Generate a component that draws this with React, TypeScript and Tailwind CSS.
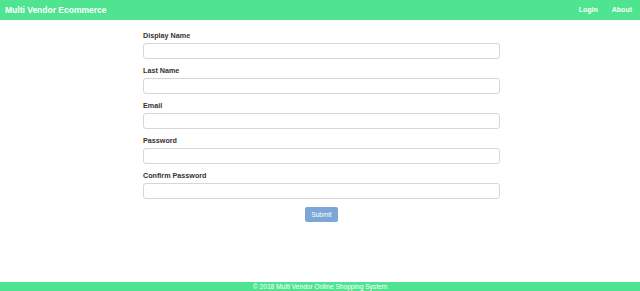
const fields = ['Display Name', 'Last Name', 'Email', 'Password', 'Confirm Password'];

const App = () => {
    return (
        <div className="flex h-[291px] w-[640px] flex-col bg-white font-['Liberation_Sans',Arial,sans-serif] text-[#333]">
            <header className="flex h-[20px] items-center justify-between bg-[#4ee490] pl-[5px] pr-[8px] text-white">
                <span className="text-[8.5px] font-bold">Multi Vendor Ecommerce</span>
                <nav className="flex gap-[14px] text-[7px] font-bold">
                    <a>Login</a>
                    <a>About</a>
                </nav>
            </header>

            <main className="flex-1 pt-[11px]">
                <form className="ml-[143px] w-[357px]">
                    {fields.map((label) => (
                        <div key={label} className="mb-[7px]">
                            <label className="block h-[10px] text-[7.2px] font-bold leading-[10px]">{label}</label>
                            <input
                                type={label.includes('Password') ? 'password' : 'text'}
                                className="mt-[2px] block h-[16px] w-full rounded-[3px] border border-[#d6d6d6] bg-white outline-none"
                            />
                        </div>
                    ))}
                    <div className="flex justify-center pt-[1px]">
                        <button
                            type="button"
                            className="h-[15px] w-[33px] rounded-[2px] bg-[#7aa7d6] text-[6.5px] text-white"
                        >
                            Submit
                        </button>
                    </div>
                </form>
            </main>

            <footer className="flex h-[9px] items-center justify-center bg-[#4ee490] text-[6.6px] leading-[9px] text-white">
                © 2018 Multi Vendor Online Shopping System
            </footer>
        </div>
    );
};

export default App;
